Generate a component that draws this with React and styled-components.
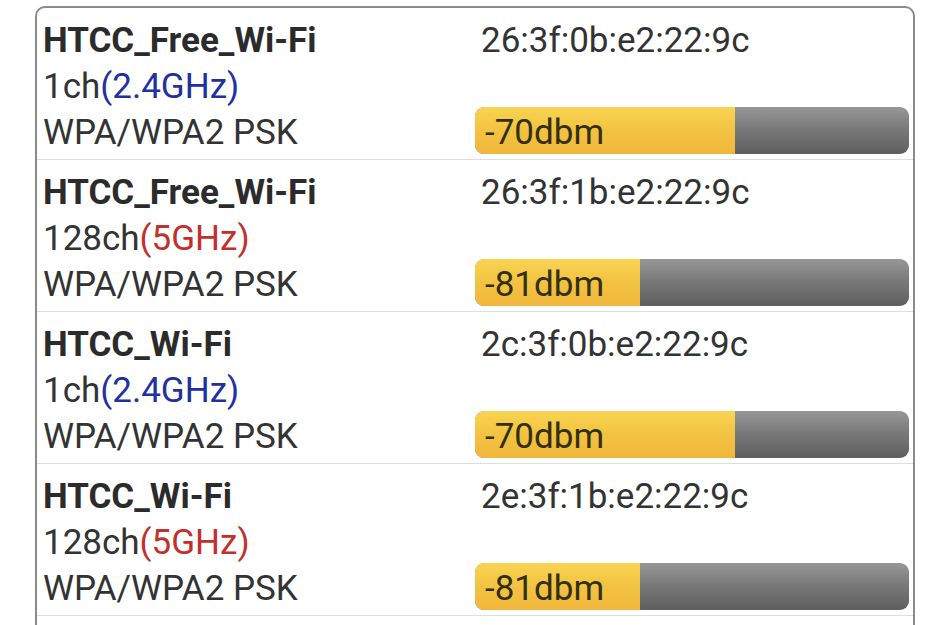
import React from 'react';
import styled, { createGlobalStyle } from 'styled-components';

const GlobalStyle = createGlobalStyle`
  html, body {
    margin: 0;
    padding: 0;
    background: #ffffff;
    overflow: hidden;
  }
  body {
    font-family: Roboto, "Liberation Sans", sans-serif;
    color: #333333;
  }
`;

const Card = styled.div`
  margin: 6px 34px 0 35px;
  border: 2px solid #8a8a8a;
  border-radius: 10px;
  padding-bottom: 60px;
`;

const Row = styled.div`
  display: flex;
  height: 152px;
  box-sizing: border-box;
  padding: 10px 4px 0 6px;
  border-bottom: 1px solid #dedede;
`;

const Info = styled.div`
  width: 432px;
  display: flex;
  flex-direction: column;
`;

const Line = styled.div`
  font-size: 35px;
  line-height: 46px;
  height: 46px;
  white-space: nowrap;
  font-weight: ${props => (props.bold ? 700 : 400)};
  color: ${props => (props.bold ? '#2b2b2b' : '#333333')};
`;

const Band = styled.span`
  color: ${props => (props.high ? '#c3302c' : '#2230a0')};
`;

const Side = styled.div`
  flex: 1;
  display: flex;
  flex-direction: column;
  justify-content: space-between;
`;

const Mac = styled.div`
  font-size: 35px;
  line-height: 46px;
  padding-left: 6px;
  color: #333333;
`;

const Bar = styled.div`
  position: relative;
  height: 47px;
  margin-bottom: 5px;
  border-radius: 9px;
  overflow: hidden;
  background: linear-gradient(#979797, #7a7a7a 45%, #5e5e5e);
  display: flex;
`;

const Fill = styled.div`
  height: 100%;
  background: linear-gradient(#f8d452, #f3c242 50%, #f0b73c);
`;

const BarLabel = styled.span`
  position: absolute;
  left: 10px;
  top: 0;
  font-size: 35px;
  line-height: 51px;
  color: #33300f;
`;

const networks = [
  { name: 'HTCC_Free_Wi-Fi', ch: '1ch', band: '2.4GHz', mac: '26:3f:0b:e2:22:9c', dbm: -70, fill: 60 },
  { name: 'HTCC_Free_Wi-Fi', ch: '128ch', band: '5GHz', mac: '26:3f:1b:e2:22:9c', dbm: -81, fill: 38 },
  { name: 'HTCC_Wi-Fi', ch: '1ch', band: '2.4GHz', mac: '2c:3f:0b:e2:22:9c', dbm: -70, fill: 60 },
  { name: 'HTCC_Wi-Fi', ch: '128ch', band: '5GHz', mac: '2e:3f:1b:e2:22:9c', dbm: -81, fill: 38 },
];

const App = () => (
  <>
    <GlobalStyle />
    <Card>
      {networks.map((n, i) => (
        <Row key={i}>
          <Info>
            <Line bold>{n.name}</Line>
            <Line>
              {n.ch}
              <Band high={n.band === '5GHz'}>({n.band})</Band>
            </Line>
            <Line>WPA/WPA2 PSK</Line>
          </Info>
          <Side>
            <Mac>{n.mac}</Mac>
            <Bar>
              <Fill style={{ width: `${n.fill}%` }} />
              <BarLabel>{n.dbm}dbm</BarLabel>
            </Bar>
          </Side>
        </Row>
      ))}
    </Card>
  </>
);

export default App;
